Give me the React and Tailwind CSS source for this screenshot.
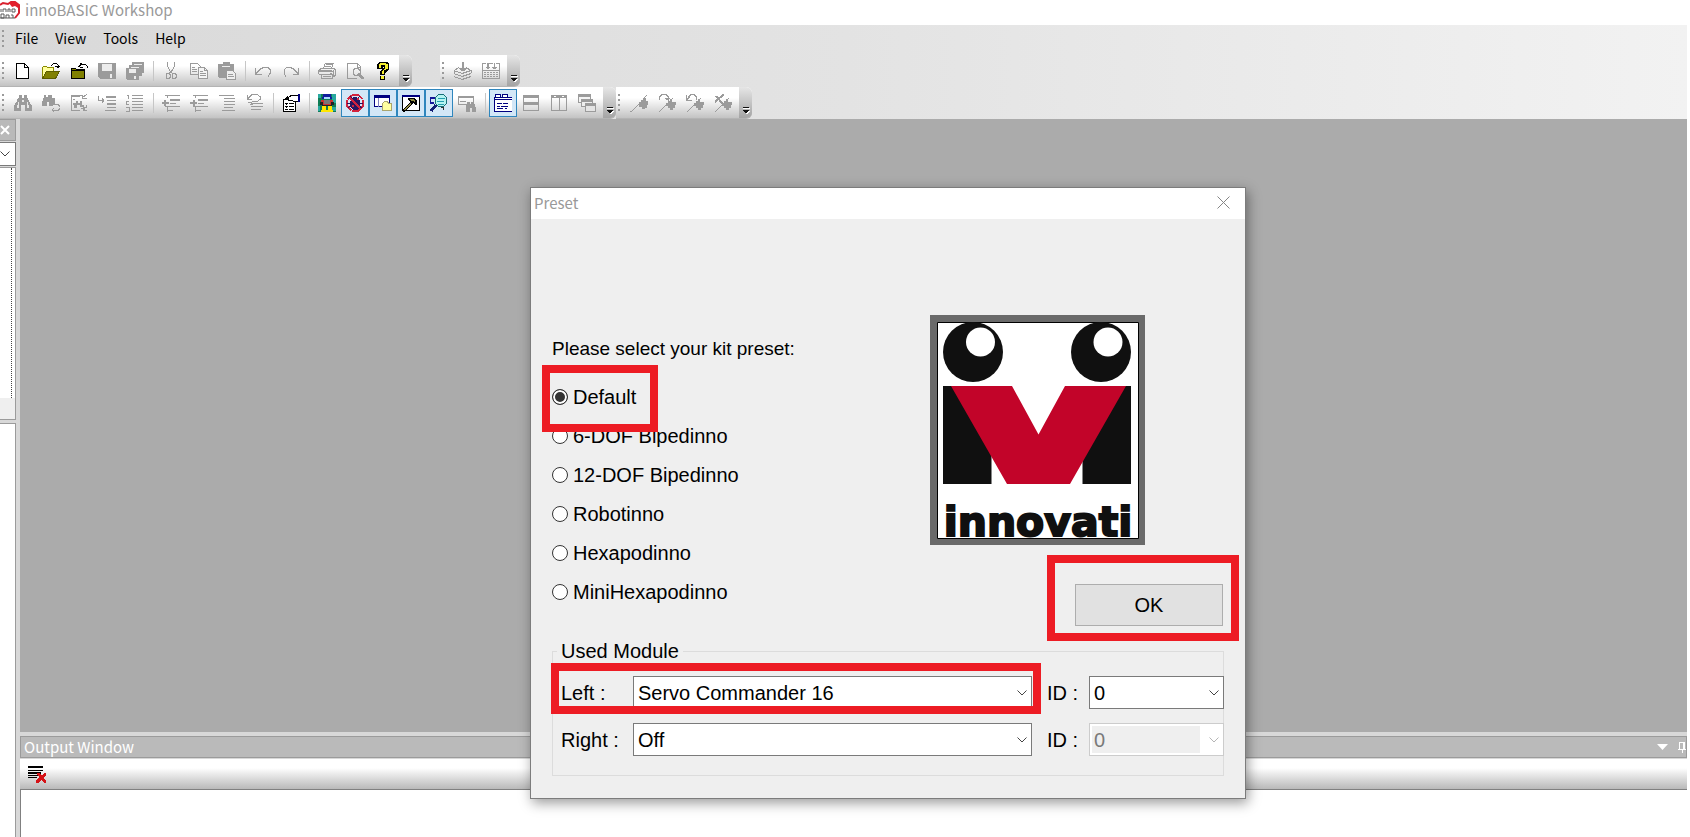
import React, { useState } from "react";

const G = "#9b9b9b";

function Icon({ children, size = 18 }) {
  return (
    <svg width={size} height={size} viewBox="0 0 18 18" fill="none" stroke={G} shapeRendering="crispEdges" aria-hidden="true">
      {children}
    </svg>
  );
}

const Binoculars = () => (
  <g fill={G} stroke="none">
    <path d="M5 1h3v3h2V1h3v3h1l1 3 3 5v5h-7v-6H7v6H0v-5l3-5 1-3h1z" />
    <path d="M4 8h1v6H3v-3h1zM13 8h1v3h1v3h-2zM8 6h2v2H8z" fill="#e6e6e6" />
  </g>
);

const Flag = () => (
  <>
    <path d="M0 17.5h2M2 16.5h1M3 15.5h1M4 14.5h1M5 13.5h1M6 12.5h1M7 11.5h1M8 10.5h2M16 1.5h1M15 2.5h1M14 3.5h1" />
    <path d="M9 8h2V6h2V4h3v3h2v4h-1v3h-2v1h-3v-2H9z" fill={G} stroke="none" />
  </>
);

const CornerFlag = () => (
  <>
    <path d="M1 17.5h1M2 16.5h1M3 15.5h1M4 14.5h1M5 13.5h1M6 12.5h1M7 11.5h2M14 4.5h1M13 5.5h1" />
    <path d="M8 9h2V7h2V5h2v3h4v3h-1v3h-2v2h-3v-2h-2v-2H8z" fill={G} stroke="none" />
  </>
);

const icons = {
  newFile: <path d="M2.5 1.5h8l4 4v11h-12zM10.5 1.5v4h4" fill="#fff" stroke="#000" />,
  open: (
    <>
      <path d="M0.5 14.5v-9l1-1h3l1 1h6v3" fill="#ffff9c" stroke="#8a8a00" />
      <path d="M0.5 16.5l4-7h13l-4 7z" fill="#808000" stroke="#5c5c00" />
      <path d="M9 3.5h1M10 2.5h1M11 1.5h4M15 2.5h1M16 3.5h1M13 4.5h5M15 5.5h2" stroke="#000" />
    </>
  ),
  openProject: (
    <>
      <path d="M1.5 16.5v-10h4l1 1h8v9z" fill="#808000" stroke="#000" />
      <path d="M1 8.5h13M8 4.5h2M9 3.5h2M10 2.5h6M16 3.5h1M17 4.5h1M17 5.5h1M10 5.5h3M10 1.5h2" stroke="#000" />
    </>
  ),
  save: (
    <>
      <path d="M0 1h18v16H2l-2-2z" fill={G} stroke="none" />
      <path d="M4 2h10v7H4zM12 12h2v4h-2z" fill="#ececec" stroke="none" />
    </>
  ),
  saveAll: (
    <>
      <path d="M6 0h12v11h-2v3h-3v4H1l-1-1V6h3V3h3z" fill={G} stroke="none" />
      <path d="M3 7h7v4H3zM8 14h2v3H8zM5 5h8v1H5zM8 2h8v1H8z" fill="#ececec" stroke="none" />
    </>
  ),
  cut: (
    <path d="M5.5 0v4l2 4 2 3M12.5 0v4l-2 4-3 3M7 11.5h-2l-1 1v3l1 1h2l1-1v-3zM11 11.5h2l1 1v3l-1 1h-2l-1-1v-3z" />
  ),
  copy: (
    <>
      <path d="M.5 1.5h7l3 3v8H.5zM2 5.5h3M2 7.5h5M2 9.5h5" />
      <path d="M8.5 5.5h6l3 3v8h-9zM14.5 5.5v3h3M10 9.5h3M10 11.5h6M10 13.5h6" fill="#f4f4f4" />
    </>
  ),
  paste: (
    <>
      <path d="M0 2h5V0h7v2h4v14H1l-1-1z" fill={G} stroke="none" />
      <path d="M4 4h8v1H4z" fill="#eee" stroke="none" />
      <path d="M8.5 8.5h6l3 3v6h-9zM10 12.5h5M10 14.5h6" fill="#eee" />
    </>
  ),
  undo: <path d="M1.5 6v6h6M2 11.5l4-4M3 10.5l4-4 3-1h4l2 2v4l-2 3" />,
  redo: <path d="M16.5 6v6h-6M16 11.5l-4-4M15 10.5l-4-4-3-1H5l-3 2v4l2 3" />,
  print: (
    <>
      <path d="M5.5 6l2-5h8l-2 5M8 2.5h6M7 4.5h6M.5 12V9l3-3h12l2 2v5l-2 2" />
      <path d="M1 9.5h14M1 12.5h14M3.5 12.5v4h11v-4M15.5 8v7M5 14.5h8M12 11h2M2 8.5h12" />
    </>
  ),
  preview: (
    <>
      <path d="M1.5 1.5h10l3 3v3M1.5 1v15.5h9M11.5 1v4h3" />
      <path d="M9 6.5h3l2 2v3l-2 2H9l-2-2v-3z" />
      <path d="M12 12l5 5M13 12l5 5" strokeWidth="2" />
    </>
  ),
  help: (
    <>
      <path d="M5 0h8l2 2v6l-4 3v2H6V9l4-3V5H9v2H3V2z" fill="#000" stroke="none" />
      <path d="M6 1h6v1h2v5h-2v1h-2v4H8V9l3-3V3H7v3H5V2h1z" fill="#f5ee30" stroke="none" />
      <path d="M6 14h5v4H6z" fill="#000" stroke="none" />
      <path d="M7 14h3v3H7z" fill="#f5ee30" stroke="none" />
    </>
  ),
  layers: (
    <>
      <path d="M9 0v9M8 0v9M5 6.5h8M6 7.5h6M7 8.5h4" />
      <path d="M5 5.5l-5 3 8 3 9-3-5-3M0 11.5l8 3 9-3M0 14.5l8 3 9-3M0 8v3M17 8v3" />
    </>
  ),
  build: (
    <>
      <path d="M0 1.5h4M7 1.5h4M14 1.5h4M.5 1v16M17.5 1v16M0 16.5h18M0 8.5h18" />
      <path d="M5 1v5M4 5.5h4M5 6.5h2M6 1v6M12 1v6M10 5.5h5M11 6.5h3" />
      <path d="M2 10.5h14M2 12.5h14M2 14.5h14" strokeDasharray="2 1" />
    </>
  ),
  find: <Binoculars />,
  findNext: (
    <>
      <path d="M2 1h2v2h2V1h2v2l3 5v4H7V8H5v4H0V8l2-5z" fill={G} stroke="none" />
      <path d="M8 1h2v3h3v7h-2V7H8z" fill={G} stroke="none" />
      <path d="M13 10.5h3l2 2v2l-2 2h-5M12 14l-2 2 2 2" />
    </>
  ),
  replace: (
    <>
      <path d="M12 1.5H1.5v15H10M1 2.5h9M3 5.5h2M12 4l5-4M12.5 5V1M13 4.5h4" />
      <path d="M3 9h3V7h2v2h2V7h2v6h-2v-2H7v3H4v-3H3zM12 11h2v2h2v-2h1v3h-2v2h2v1h-4v-2h-2v-1h2z" fill={G} stroke="none" />
    </>
  ),
  goTo: (
    <>
      <path d="M.5 2v4.5H6M4.5 4v5M5.5 5v3" />
      <path d="M8 2h10v2H8zM9 6h9v1H9zM9 9h9v2H9zM9 13h9v1H9zM7 16h11v1H7z" fill={G} stroke="none" />
    </>
  ),
  lineNumbers: (
    <>
      <path d="M1 1.5h2M2.5 1v4M0 7.5h3M.5 7v4M0 10.5h3M0 13.5h3v4H0" />
      <path d="M6 1.5h11M6 4.5h11M6 7.5h11M6 10.5h11M6 13.5h11M6 16.5h11" />
    </>
  ),
  outdent: (
    <>
      <path d="M0 8h2V6h2v2h3v2H4v2H2v-2H0z" fill={G} stroke="none" />
      <path d="M3 1.5h15M3 12.5h15M5 16.5h6M5.5 1v3M5.5 12v6" />
      <path d="M8 5h10v2H8zM8 9h6v1H8z" fill={G} stroke="none" />
    </>
  ),
  indent: (
    <>
      <path d="M0 8h3V6h2v2h2v2H5v2H3v-2H0z" fill={G} stroke="none" />
      <path d="M3 1.5h15M3 12.5h15M5 16.5h6M5.5 1v3M5.5 12v6" />
      <path d="M8 5h10v2H8zM8 9h6v1H8z" fill={G} stroke="none" />
    </>
  ),
  comment: <path d="M1 1.5h15M6 4.5h11M6 7.5h11M6 10.5h11M6 13.5h9M4 16.5h13" />,
  uncomment: (
    <>
      <path d="M1.5 1v4h4M2 4.5l4-4h5l3 2v3l-3 2H6" />
      <path d="M5 9.5h12M5 12.5h12M5 15.5h10" />
      <path d="M2 8.5h4M4 10.5h3" />
    </>
  ),
  properties: (
    <>
      <path d="M1.5 5.5h12v12h-12z" fill="#fff" stroke="#000" />
      <path d="M3 9.5h3M3 12.5h3M3 15.5h3M7 9.5h5M7 12.5h5M7 15.5h5M3 5.5l3-3M4 4.5h6" stroke="#000" />
      <path d="M6 4l4-3h6v6h-5l-2-1H6z" fill="#fff" stroke="#000" />
      <path d="M16 0h3v8h-3z" fill="#000080" stroke="none" />
      <path d="M4 9h1v2H4zM4 12h1v2H4z" fill="#000" stroke="none" />
    </>
  ),
  robot: (
    <g stroke="none">
      <path d="M0 0h19v18H0z" fill="#107c55" />
      <path d="M0 0h3v4H0zM14 0h4v9h-4zM0 12h2v5H0zM14 13h4v4h-4z" fill="#29a9a0" />
      <path d="M5 0h8v3h1v2H4V3h1z" fill="#101c9c" />
      <path d="M6 3h6v2H6z" fill="#a9d9ff" />
      <path d="M3 6h12v3h-2v2H5V9H3z" fill="#c83232" />
      <path d="M6 6h6v4H6z" fill="#777" />
      <path d="M2 8h3v3H2zM13 8h3v3h-3zM4 11h10v1H4z" fill="#222" />
      <path d="M4 12h4v4h1v2H3v-2h1zM10 12h4v4h1v2h-6v-2h1z" fill="#ffe600" />
    </g>
  ),
  bug: (
    <>
      <path d="M5.5 1h7M12.5 1l4 4M17 5.5v7M16.500 12.500l-4 4M12.500 17h-7M5.500 16.500l-4-4M1 12.500v-7M1.500 5.500l4-4" stroke="#d3223d" strokeWidth="2" />
      <path d="M6 5h1V3h4v2h1l2 2v6l-3 3H7l-3-3V7z" fill="#2a1560" stroke="none" />
      <path d="M4 2l3 3M14 2l-3 3M1 9.5h16M2 14l4-3M16 14l-4-3" stroke="#2a1560" />
      <path d="M4 4l10 10M6 12h2M11 5h2" stroke="#d3223d" strokeWidth="2" />
    </>
  ),
  explorer: (
    <>
      <path d="M.5 1.5h15v11H.5z" fill="#fff" stroke="#000080" />
      <path d="M0 1h16v3H0z" fill="#000080" stroke="none" />
      <path d="M4.5 4v9" stroke="#8080c0" />
      <path d="M9.5 8.5l1-1h3l1 2h3v7h-9v-7z" fill="#ffffa0" stroke="#aaa56e" />
    </>
  ),
  toolbox: (
    <>
      <path d="M.5 1.5h17v15H.5z" fill="#fff" stroke="#000" />
      <path d="M0 1h18v2H0z" fill="#000080" stroke="none" />
      <path d="M6 4h6l3 2v5h-2l-2-2-1 1-6 7-3 1v-3l7-7-2-2z" fill="#000" stroke="none" />
      <path d="M7 5h4l2 2v2l-2-2H9zM8 9h1v1l-5 6H2v-1z" fill="#8e8840" stroke="none" />
    </>
  ),
  search: (
    <>
      <path d="M0 3h5v2H1v3h3v2H0z" fill="#15159a" stroke="none" />
      <path d="M8.5.5h5l3 3v6l-3 3h-5l-3-3v-6z" fill="#b5f3f1" stroke="#176f78" />
      <path d="M8 4.5h7M7 7.5h7M8 10.5h6" stroke="#259fb0" />
      <path d="M6 11l-5 6" stroke="#111c75" strokeWidth="3" />
      <path d="M11 13.5h3M13.5 14v2" stroke="#333" />
    </>
  ),
  findWindow: (
    <>
      <path d="M.5 2.5h15v8H.5zM1 3.5h14M2 7.5h6" />
      <path d="M9 8h3v2h1V8h3l2 6v4h-4v-4h-2v4H8v-4z" fill={G} stroke="none" />
    </>
  ),
  tabs: (
    <>
      <path d="M.5 3.5h18v14H.5z" fill="#fff" stroke="#000080" />
      <path d="M1.5 3V.5h5V3M8.5 3V.5h5V3" fill="#fff" stroke="#000080" />
      <path d="M0 5.5h18M3 9.5h5M9 9.5h5M3 12.5h3M7 12.5h7M3 14.5h6M11 14.5h2" stroke="#000080" />
    </>
  ),
  tileRows: <path d="M1.5 1.5h15v15h-15zM1 2.5h16M1 3.5h16M1 8.5h16M1 9.5h16M1 10.5h16" />,
  tileCols: <path d="M1.5 1.5h15v15h-15zM1 2.5h3M6 2.5h6M14 2.5h3M1 3.5h16M9 1v16" />,
  cascade: (
    <>
      <path d="M.5.5h12v8H.5z" fill="#f4f4f4" />
      <path d="M0 0h13v3H0z" fill={G} stroke="none" />
      <path d="M3.5 5.5h11v7h-11z" fill="#eee" />
      <path d="M3 5h12v3H3z" fill={G} stroke="none" />
      <path d="M7.5 9.5h10v8h-10z" fill="#e4e4e4" />
      <path d="M7 9h11v3H7z" fill={G} stroke="none" />
    </>
  ),
  flag: <Flag />,
  flagNext: (
    <>
      <CornerFlag />
      <path d="M1 5.5l1-3 2-2h4l2 2v4M7 4.5h5M8 5.5h3" />
    </>
  ),
  flagPrev: (
    <>
      <CornerFlag />
      <path d="M10 5.5v-3l-2-2H5l-2 2-1 2M.5 1v5H6M1 5.5l3-3" />
    </>
  ),
  flagClear: (
    <>
      <CornerFlag />
      <path d="M2 2l7 8M1 8l9-8" strokeWidth="2" />
    </>
  ),
  clearOutput: (
    <>
      <path d="M0 1h15v2H0zM0 5h15v1H0zM0 7h13v2H0zM0 10h10v1H0zM0 12h9v1H0z" fill="#000" stroke="none" />
      <path d="M9 8h3l2 3 2-3h2v2l-2 3 2 3v2h-2l-3-3-2 3H8v-3l3-3-2-2z" fill="#d51317" stroke="none" />
    </>
  ),
};

function ToolButton({ icon, label, active }) {
  return (
    <button
      type="button"
      aria-label={label}
      aria-pressed={active}
      className={
        "flex h-7 w-7 shrink-0 items-center justify-center " +
        (active ? "border border-[#2f86bd] bg-[#d3e7f7]" : "")
      }
    >
      <Icon>{icons[icon]}</Icon>
    </button>
  );
}

function Grip() {
  return (
    <div className="flex w-[9px] shrink-0 flex-col items-start gap-[3px] pl-[2px]">
      {[0, 1, 2, 3].map((i) => (
        <span key={i} className="h-[2px] w-[2px] bg-[#9a9a9a]" />
      ))}
    </div>
  );
}

function Toolbar({ items, label }) {
  return (
    <div
      role="toolbar"
      aria-label={label}
      className="flex h-8 items-center overflow-hidden rounded-r-md border-b border-[#b4b4b4] bg-linear-to-b from-white from-35% to-[#c3c3c3]"
    >
      <Grip />
      {items.map((item, i) =>
        item ? (
          <ToolButton key={i} icon={item[0]} label={item[1]} active={item[2]} />
        ) : (
          <div key={i} className="flex w-2 shrink-0 justify-center">
            <span className="h-5 w-px bg-[#c6c6c6]" />
          </div>
        )
      )}
      <button
        type="button"
        aria-label="Toolbar options"
        className="ml-[2px] flex h-8 w-[13px] shrink-0 items-end justify-center bg-linear-to-b from-[#e6e6e6] to-[#a2a2a2] pb-1"
      >
        <svg width="8" height="9" viewBox="0 0 8 9" shapeRendering="crispEdges" aria-hidden="true">
          <path d="M1 2h7v1H1zM2 5h6L5 9z" fill="#fff" />
          <path d="M1 1h6v1H1zM1 4h6L4 8z" fill="#111" />
        </svg>
      </button>
    </div>
  );
}

const standard = [
  ["newFile", "New"], ["open", "Open"], ["openProject", "Open project"], ["save", "Save"], ["saveAll", "Save all"], null,
  ["cut", "Cut"], ["copy", "Copy"], ["paste", "Paste"], null,
  ["undo", "Undo"], ["redo", "Redo"], null,
  ["print", "Print"], ["preview", "Print preview"], ["help", "Help"],
];
const build = [["layers", "Download"], ["build", "Build"]];
const edit = [
  ["find", "Find"], ["findNext", "Find next"], ["replace", "Replace"], ["goTo", "Go to line"], ["lineNumbers", "Line numbers"], null,
  ["outdent", "Outdent"], ["indent", "Indent"], ["comment", "Comment"], ["uncomment", "Uncomment"], null,
  ["properties", "Properties"], null,
  ["robot", "Robot"], ["bug", "Debug", true], ["explorer", "Explorer", true], ["toolbox", "Toolbox", true],
  ["search", "Search results", true], ["findWindow", "Find window"], null,
  ["tabs", "Tabbed view", true], ["tileRows", "Tile horizontally"], ["tileCols", "Tile vertically"], ["cascade", "Cascade"],
];
const bookmarks = [
  ["flag", "Toggle bookmark"], ["flagNext", "Next bookmark"], ["flagPrev", "Previous bookmark"], ["flagClear", "Clear bookmarks"],
];

function Chevron({ className }) {
  return (
    <svg width="10" height="6" viewBox="0 0 10 6" fill="none" stroke="currentColor" className={className} aria-hidden="true">
      <path d="M.5.5L5 5 9.5.5" />
    </svg>
  );
}

function Combo({ id, options, disabled }) {
  return (
    <div
      className={
        "relative h-[33px] border bg-white p-[2px] " +
        (disabled ? "border-[#cccccc] pr-[23px] text-[#7a7a7a]" : "border-[#7a7a7a] text-black")
      }
    >
      <select
        id={id}
        disabled={disabled}
        className={
          "block h-full w-full appearance-none pl-[2px] leading-6 opacity-100 outline-none " +
          (disabled ? "bg-[#efefef]" : "bg-white")
        }
      >
        {options.map((o) => (
          <option key={o}>{o}</option>
        ))}
      </select>
      <Chevron className={"pointer-events-none absolute top-[13px] right-[4px] " + (disabled ? "text-[#b5b5b5]" : "text-[#444]")} />
    </div>
  );
}

function Logo() {
  return (
    <svg width="215" height="230" viewBox="0 0 215 230" role="img" aria-label="innovati" className="overflow-visible">
      <path d="M0 0h215v230H0z" fill="#6a6a6a" />
      <path d="M7.5 7.5h201v216H7.5z" fill="#fff" stroke="#000" />
      <circle cx="43" cy="37" r="30" fill="#101010" />
      <circle cx="171" cy="37" r="30" fill="#101010" />
      <circle cx="50.5" cy="27" r="14.5" fill="#fff" />
      <circle cx="178" cy="27" r="14.5" fill="#fff" />
      <path d="M13 71h30l18.500 60v38H13zM201 71h-30l-18.500 60v38H201z" fill="#101010" />
      <path d="M21 71h61l26.500 48.500L135 71h61l-56 98H77z" fill="#c20429" />
      <text x="108" y="221" textAnchor="middle" fontFamily="'DejaVu Sans', sans-serif" fontWeight="700" fontSize="41" fill="#101010" stroke="#101010" strokeWidth="2">
        innovati
      </text>
    </svg>
  );
}

const kits = ["Default", "6-DOF Bipedinno", "12-DOF Bipedinno", "Robotinno", "Hexapodinno", "MiniHexapodinno"];

function PresetDialog() {
  const [kit, setKit] = useState("Default");
  return (
    <section
      role="dialog"
      aria-labelledby="preset-title"
      className="absolute top-[187px] left-[530px] w-[716px] border border-[#7c7c7c] bg-[#efefef] shadow-[2px_4px_12px_rgba(0,0,0,0.4)]"
    >
      <header className="flex h-[31px] items-center justify-between bg-white pr-[15px] pb-[2px] pl-[3px]">
        <h2 id="preset-title" className="font-['Noto_Sans_CJK_TC','Noto_Sans',sans-serif] text-[15px] leading-6 text-[#999]">Preset</h2>
        <button type="button" aria-label="Close">
          <svg width="13" height="13" viewBox="0 0 13 13" stroke="#858585" aria-hidden="true">
            <path d="M.5.5l12 12M12.5.5l-12 12" />
          </svg>
        </button>
      </header>
      <div className="px-[21px] pb-[22px] font-['Liberation_Sans',Arial,sans-serif] text-[20px] leading-6 text-black">
        <div className="flex justify-between">
          <div className="pt-[118px]">
            <p className="mb-6 text-[19px]">Please select your kit preset:</p>
            <div role="radiogroup" className="flex flex-col items-start gap-[15px]">
              {kits.map((k) => (
                <label key={k} className="relative flex items-center gap-[5px]">
                  <input
                    type="radio"
                    name="kit"
                    checked={kit === k}
                    onChange={() => setKit(k)}
                    className="h-4 w-4 appearance-none rounded-full border border-[#333] bg-white checked:bg-[#333] checked:shadow-[inset_0_0_0_2px_white]"
                  />
                  {k}
                  {k === "Default" && (
                    <span className="pointer-events-none absolute -top-[20px] -left-[10px] z-10 h-[67px] w-[116px] border-8 border-[#ed1c24]" />
                  )}
                </label>
              ))}
            </div>
          </div>
          <div className="flex w-[294px] flex-col pt-[96px]">
            <Logo />
            <div className="relative mt-[39px] mr-px self-end">
              <button type="button" className="block h-[42px] w-[148px] border border-[#adadad] bg-[#e1e1e1]">OK</button>
              <span className="pointer-events-none absolute -top-[29px] -left-[28px] h-[86px] w-[192px] border-8 border-[#ed1c24]" />
            </div>
          </div>
        </div>
        <fieldset className="mt-[13px] border border-[#dcdcdc] pb-[19px] pl-2">
          <legend className="-ml-1 px-1">Used Module</legend>
          <div className="relative -mr-px mt-[13px] grid grid-cols-[72px_399px_57px_1fr] items-center gap-y-[14px]">
            <label htmlFor="left">Left :</label>
            <Combo id="left" options={["Servo Commander 16", "Off"]} />
            <label htmlFor="left-id" className="pl-[15px]">ID :</label>
            <Combo id="left-id" options={["0", "1", "2"]} />
            <label htmlFor="right">Right :</label>
            <Combo id="right" options={["Off", "Servo Commander 16"]} />
            <label htmlFor="right-id" className="pl-[15px]">ID :</label>
            <Combo id="right-id" options={["0"]} disabled />
            <span className="pointer-events-none absolute -top-[13px] -left-[10px] h-[51px] w-[490px] border-8 border-[#ed1c24]" />
          </div>
        </fieldset>
      </div>
    </section>
  );
}

export default function App() {
  return (
    <div className="relative flex h-screen flex-col overflow-hidden bg-white pr-[3px] font-['Noto_Sans_CJK_TC','Noto_Sans',sans-serif] text-[15px] leading-6">
      <header className="flex h-[25px] shrink-0 items-start gap-[5px] leading-5 text-[#999]">
        <svg width="20" height="20" viewBox="0 0 20 20" fill="none" aria-hidden="true">
          <path d="M0 5l3-2 5 1 3-2h4l4 3v8l-4 5" stroke="#d9212f" strokeWidth="2" />
          <path d="M9 3l5-2 4 3v4l-3-2-3 1z" fill="#e3202c" />
          <path d="M1 9v3M3 12V9h3v3M8 12V9h2v3M12 9h3v3h-3zM1 14v4h3v-4zM6 18v-3h3v3M11 15h2v3M0 18h15" stroke="#5b5b5b" />
        </svg>
        <h1>innoBASIC Workshop</h1>
      </header>

      <div className="shrink-0 bg-linear-to-r from-[#d9d9d9] via-[#e3e3e3] to-[#f2f2f2]">
        <nav className="flex h-[30px] items-center pb-1 text-[14px] text-black">
          <Grip />
          <div className="flex gap-[17px] pl-[6px]">
            <a href="#file">File</a>
            <a href="#view">View</a>
            <a href="#tools">Tools</a>
            <a href="#help">Help</a>
          </div>
        </nav>
        <div className="flex gap-7">
          <Toolbar label="Standard" items={standard} />
          <Toolbar label="Build" items={build} />
        </div>
        <div className="flex">
          <Toolbar label="Edit" items={edit} />
          <Toolbar label="Bookmarks" items={bookmarks} />
        </div>
      </div>

      <div className="flex min-h-0 flex-1 bg-[#d8d8d8]">
        <aside className="mr-1 flex w-4 shrink-0 flex-col">
          <div className="flex h-[22px] shrink-0 items-center border-y border-r border-[#9b9b9b] bg-[#b9b9b9]">
            <button type="button" aria-label="Close panel">
              <svg width="11" height="11" viewBox="0 0 11 11" stroke="#fff" strokeWidth="2" aria-hidden="true">
                <path d="M1 1l8 8M9 1l-8 8" />
              </svg>
            </button>
          </div>
          <button type="button" aria-label="Choose object" className="mt-px flex h-6 shrink-0 items-center border border-l-0 border-[#7a7a7a] bg-white">
            <Chevron className="text-[#444]" />
          </button>
          <div className="mt-px h-[253px] shrink-0 border border-l-0 border-[#9b9b9b] bg-[#efefef]">
            <div className="h-[230px] bg-white pr-[3px]">
              <div className="h-full border-r border-dotted border-[#444]" />
            </div>
          </div>
          <div className="mt-[3px] flex-1 border-t border-r border-[#9b9b9b] bg-white" />
        </aside>

        <div className="flex min-w-0 flex-1 flex-col">
          <main className="flex-1 bg-[#ababab]" />
          <section className="mt-1 shrink-0">
            <header className="flex h-[22px] items-center justify-between overflow-hidden border border-[#9b9b9b] bg-[#bababa] pl-[3px] text-white">
              <h2>Output Window</h2>
              <div className="flex items-center gap-[10px]">
                <button type="button" aria-label="Window position">
                  <svg width="11" height="6" viewBox="0 0 11 6" aria-hidden="true"><path d="M0 0h11L5.5 6z" fill="#fff" /></svg>
                </button>
                <button type="button" aria-label="Auto hide">
                  <svg width="8" height="11" viewBox="0 0 8 11" fill="none" stroke="#fff" shapeRendering="crispEdges" aria-hidden="true">
                    <path d="M1.5 0v7M0 7.5h8M2 .5h5M5.5 0v7M6.5 0v7M4.5 8v3" />
                  </svg>
                </button>
              </div>
            </header>
            <div className="mt-px flex h-[31px] items-center border-b border-[#808080] bg-linear-to-b from-white from-30% to-[#b9b9b9] pl-[3px]">
              <ToolButton icon="clearOutput" label="Clear output" />
            </div>
            <div className="h-[47px] border-l border-[#808080] bg-white" />
          </section>
        </div>
      </div>

      <PresetDialog />
    </div>
  );
}
